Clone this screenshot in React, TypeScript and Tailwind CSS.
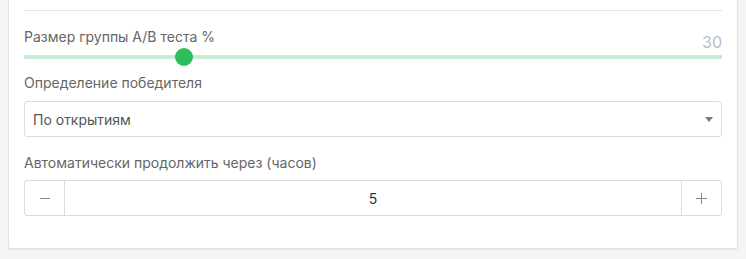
import { useState } from "react";

export default function App() {
  const [size] = useState(30);
  const [hours, setHours] = useState(5);

  return (
    <div className="h-[259px] bg-[#f5f5f5] px-[8px] font-['Inter',sans-serif]">
      <div className="rounded-b-[3px] border border-t-0 border-[#e2e2e2] bg-white px-[15px] pt-[10px] pb-[32px] shadow-[0_1px_2px_rgba(0,0,0,0.06)]">
        <div className="border-t border-[#e4e4e4]" />

        <div className="mt-[16px] flex h-[21px] items-start justify-between">
          <span className="text-[14px] leading-[20px] text-[#666]">
            Размер группы A/B теста %
          </span>
          <span className="mt-[3px] text-[16px] leading-[24px] text-[#b4bdc9]">
            {size}
          </span>
        </div>

        <div className="relative h-[18px]">
          <div className="absolute top-[7px] right-0 left-0 h-[4px] bg-[#c9ecd3]" />
          <div className="absolute top-0 left-[151px] h-[18px] w-[18px] rounded-full bg-[#2fbf5a]" />
        </div>

        <div className="mt-[7px] text-[14px] leading-[20px] text-[#666]">
          Определение победителя
        </div>
        <div className="mt-[8px] flex h-[36px] items-center justify-between rounded-[3px] border border-[#dcdcdc] pr-[8px] pl-[8px]">
          <span className="text-[14px] text-[#555]">По открытиям</span>
          <svg width="8" height="5" viewBox="0 0 8 5">
            <path d="M0 0h8L4 5z" fill="#7a7a7a" />
          </svg>
        </div>

        <div className="mt-[16px] text-[14px] leading-[20px] text-[#666]">
          Автоматически продолжить через (часов)
        </div>
        <div className="mt-[7px] flex h-[36px] rounded-[3px] border border-[#dcdce0]">
          <button
            type="button"
            onClick={() => setHours((h) => Math.max(0, h - 1))}
            className="flex w-[40px] items-center justify-center border-r border-[#dcdce0]"
          >
            <span className="block h-px w-[10px] bg-[#888]" />
          </button>
          <div className="flex flex-1 items-center justify-center text-[14px] text-[#333]">
            {hours}
          </div>
          <button
            type="button"
            onClick={() => setHours((h) => h + 1)}
            className="flex w-[40px] items-center justify-center border-l border-[#dcdce0]"
          >
            <svg width="11" height="11" viewBox="0 0 11 11">
              <path d="M5.5 0v11M0 5.5h11" stroke="#888" strokeWidth="1" />
            </svg>
          </button>
        </div>
      </div>
    </div>
  );
}
